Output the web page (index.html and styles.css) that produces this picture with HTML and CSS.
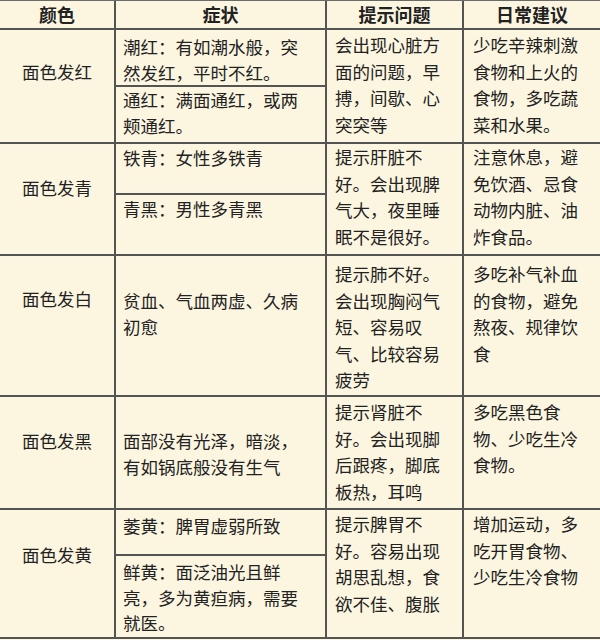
FILE: index.html
```html
<!DOCTYPE html>
<html lang="zh">
<head>
<meta charset="utf-8">
<title>面色与健康</title>
<link rel="stylesheet" href="styles.css">
</head>
<body>
<div class="sheet">
  <div class="cell head">颜色</div>
  <div class="cell head">症状</div>
  <div class="cell head">提示问题</div>
  <div class="cell head">日常建议</div>

  <div class="cell c1 span2 r1">面色发红</div>
  <div class="cell c2 r1a">潮红：有如潮水般，突<br>然发红，平时不红。</div>
  <div class="cell c3 span2 r1">会出现心脏方<br>面的问题，早<br>搏，间歇、心<br>突突等</div>
  <div class="cell c4 span2 r1">少吃辛辣刺激<br>食物和上火的<br>食物，多吃蔬<br>菜和水果。</div>
  <div class="cell c2 r1b">通红：满面通红，或两<br>颊通红。</div>

  <div class="cell c1 span2 r2">面色发青</div>
  <div class="cell c2 r2a">铁青：女性多铁青</div>
  <div class="cell c3 span2 r2">提示肝脏不<br>好。会出现脾<br>气大，夜里睡<br>眠不是很好。</div>
  <div class="cell c4 span2 r2">注意休息，避<br>免饮酒、忌食<br>动物内脏、油<br>炸食品。</div>
  <div class="cell c2 r2b">青黑：男性多青黑</div>

  <div class="cell c1 r3">面色发白</div>
  <div class="cell c2 r3">贫血、气血两虚、久病<br>初愈</div>
  <div class="cell c3 r3">提示肺不好。<br>会出现胸闷气<br>短、容易叹<br>气、比较容易<br>疲劳</div>
  <div class="cell c4 r3">多吃补气补血<br>的食物，避免<br>熬夜、规律饮<br>食</div>

  <div class="cell c1 r4">面色发黑</div>
  <div class="cell c2 r4">面部没有光泽，暗淡，<br>有如锅底般没有生气</div>
  <div class="cell c3 r4">提示肾脏不<br>好。会出现脚<br>后跟疼，脚底<br>板热，耳鸣</div>
  <div class="cell c4 r4">多吃黑色食<br>物、少吃生冷<br>食物。</div>

  <div class="cell c1 span2 r5">面色发黄</div>
  <div class="cell c2 r5a">萎黄：脾胃虚弱所致</div>
  <div class="cell c3 span2 r5">提示脾胃不<br>好。容易出现<br>胡思乱想，食<br>欲不佳、腹胀</div>
  <div class="cell c4 span2 r5">增加运动，多<br>吃开胃食物、<br>少吃生冷食物</div>
  <div class="cell c2 r5b">鲜黄：面泛油光且鲜<br>亮，多为黄疸病，需要<br>就医。</div>
</div>
</body>
</html>
```

FILE: styles.css
```css
html, body {
  margin: 0;
  padding: 0;
  background: #fcf6e1;
}

body {
  width: 600px;
  height: 640px;
  overflow: hidden;
  font-family: "Noto Sans CJK SC", "Noto Sans", sans-serif;
  color: #222;
}

.sheet {
  display: grid;
  grid-template-columns: 114px 209px 135px 136px;
  grid-template-rows: 27px 55px 55px 49px 59px 139px 111px 44px 81px;
  gap: 2px;
  background: #545454;
  border-top: 1px solid #6a6a6a;
  border-bottom: 2px solid #545454;
}

.cell {
  background: #fcf6e1;
  font-size: 17.5px;
  white-space: nowrap;
  box-sizing: border-box;
}

.head {
  display: flex;
  align-items: center;
  justify-content: center;
  font-size: 18px;
  font-weight: 700;
  line-height: 27px;
}

.span2 {
  grid-row: span 2;
}

.c1 {
  text-align: center;
  line-height: 27px;
  padding-top: 30px;
}

.c2 {
  line-height: 25.5px;
  padding-left: 7px;
}

.c3 {
  line-height: 26.5px;
  padding-left: 8px;
}

.c4 {
  line-height: 26.5px;
  padding-left: 9px;
}

/* column 1 vertical placement */
.c1.r1 { padding-top: 28px; }
.c1.r3 { padding-top: 29px; }
.c1.r5 { padding-top: 31px; }

/* column 2 vertical placement */
.c2.r1a { padding-top: 4px; }
.c2.r1b { padding-top: 0; }
.c2.r2a { padding-top: 1px; }
.c2.r2b { padding-top: 1px; }
.c2.r3 { padding-top: 32px; }
.c2.r4 { padding-top: 31px; }
.c2.r5a { padding-top: 3px; }
.c2.r5b { padding-top: 3px; }

/* columns 3 and 4 vertical placement */
.c3.r1, .c4.r1 { padding-top: 2px; }
.c3.r2, .c4.r2 { padding-top: 0; }
.c3.r3, .c4.r3 { padding-top: 5px; }
.c3.r4, .c4.r4 { padding-top: 2px; }
.c3.r5, .c4.r5 { padding-top: 1px; }
```
